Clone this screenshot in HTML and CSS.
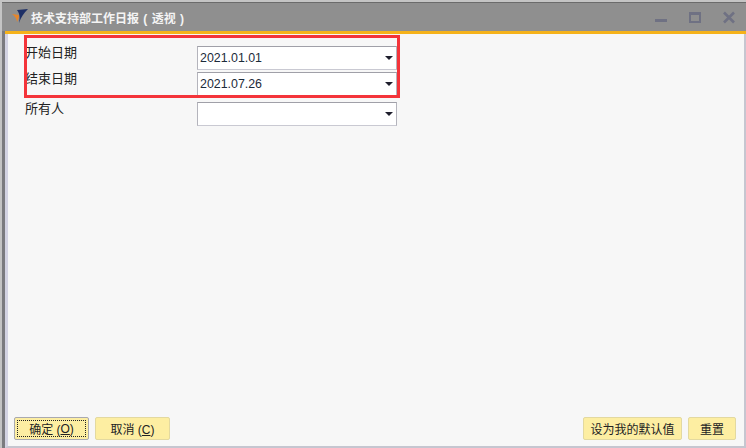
FILE: index.html
```html
<!DOCTYPE html>
<html lang="zh-CN">
<head>
    <meta charset="UTF-8">
    <title>技术支持部工作日报(透视)</title>
    <link rel="stylesheet" href="styles.css">
</head>
<body>
    <div class="window">
        <div class="frame">
            <!-- 标题栏 -->
            <div class="titlebar">
                <svg class="logo" width="16" height="16" viewBox="0 0 16 16">
                    <path d="M5 1 L16 0 C12 4 9 8 7 14 C8 9 8 5 5 1 Z" fill="#1d2f66"/>
                    <path d="M0 5 L7 6 C7 9 6 11 5 13 C5 10 3 7 0 5 Z" fill="#e8862a"/>
                </svg>
                <span class="title">技术支持部工作日报 ( 透视 )</span>
                <div class="controls">
                    <svg width="14" height="14" viewBox="0 0 14 14"><rect x="1" y="8" width="12" height="3" fill="#6f7183"/></svg>
                    <svg width="14" height="14" viewBox="0 0 14 14"><rect x="2" y="2" width="10" height="9" fill="none" stroke="#6f7183" stroke-width="2"/><rect x="2" y="2" width="10" height="2" fill="#6f7183"/></svg>
                    <svg width="14" height="14" viewBox="0 0 14 14"><path d="M2 1.5 L12 11.5 M12 1.5 L2 11.5" stroke="#6f7183" stroke-width="2.6"/></svg>
                </div>
            </div>
            <div class="accent"></div>

            <!-- 查询条件 -->
            <div class="content">
                <div class="fields">
                    <div class="field">
                        <label>开始日期</label>
                        <div class="combo"><span>2021.01.01</span><i class="arrow"></i></div>
                    </div>
                    <div class="field">
                        <label>结束日期</label>
                        <div class="combo"><span>2021.07.26</span><i class="arrow"></i></div>
                    </div>
                    <div class="field field-gap">
                        <label>所有人</label>
                        <div class="combo"><span></span><i class="arrow"></i></div>
                    </div>
                </div>
                <div class="highlight"></div>

                <div class="actions">
                    <button class="btn btn-main focused"><span>确定 (<u>O</u>)</span></button>
                    <button class="btn btn-main">取消 (<u>C</u>)</button>
                    <button class="btn btn-default">设为我的默认值</button>
                    <button class="btn btn-reset">重置</button>
                </div>
            </div>
        </div>
    </div>
</body>
</html>
```

FILE: styles.css
```css
* {
    box-sizing: border-box;
}

html, body {
    margin: 0;
    padding: 0;
    height: 448px;
    overflow: hidden;
}

body {
    font-family: "Liberation Sans", "Noto Sans CJK SC", sans-serif;
    font-size: 13px;
    color: #222;
    background: #fff;
}

.window {
    width: 746px;
    height: 448px;
    padding: 2px 0 0 2px;
    background: #c4c4c4;
}

.frame {
    display: flex;
    flex-direction: column;
    height: 100%;
    border-top: 1px solid #6b6b6b;
    background: #7b7b7f;
}

.titlebar {
    display: flex;
    align-items: center;
    height: 28px;
    padding: 0 10px 0 10px;
    background: #8f8f8f;
}

.logo {
    margin-right: 3px;
}

.title {
    color: #f4f4f4;
    font-size: 12px;
    font-weight: bold;
    word-spacing: 1px;
}

.controls {
    display: flex;
    gap: 20px;
    margin-left: auto;
    padding-top: 2px;
}

.accent {
    height: 3px;
    margin-left: 3px;
    background: #f5b21a;
}

.content {
    position: relative;
    display: flex;
    flex-direction: column;
    flex: 1;
    margin-left: 3px;
    padding: 12px 8px 6px 17px;
    background: #f7f7f7;
    border-left: 3px solid #d3d3e2;
    border-right: 2px solid #c6c6d0;
    border-bottom: 2px solid #c6c6d0;
}

.fields {
    display: flex;
    flex-direction: column;
    gap: 2px;
}

.field {
    display: flex;
    height: 24px;
}

.field-gap {
    margin-top: 4px;
}

.field label {
    width: 172px;
    line-height: 13px;
    font-size: 13px;
}

.combo {
    display: flex;
    align-items: center;
    justify-content: space-between;
    width: 200px;
    padding: 0 3px 0 2px;
    background: #fff;
    border: 1px solid #c9c9d2;
    border-top-color: #a0a0a8;
    border-left-color: #b4b4bc;
    border-right-color: #b4b4bc;
    color: #1c2b3a;
    font-size: 12.4px;
}

.arrow {
    width: 0;
    height: 0;
    border-left: 4px solid transparent;
    border-right: 4px solid transparent;
    border-top: 4px solid #1e1e2c;
}

.highlight {
    position: absolute;
    left: 16px;
    top: 1px;
    width: 376px;
    height: 63px;
    border: 3px solid #f4343a;
    pointer-events: none;
}

.actions {
    display: flex;
    gap: 6px;
    margin-top: auto;
    margin-left: -11px;
}

.btn {
    height: 23px;
    padding: 0;
    font-family: inherit;
    font-size: 12px;
    color: #222;
    background: #fdeea2;
    border: 1px solid #e3d9a0;
    border-radius: 2px;
}

.btn-main {
    width: 75px;
}

.focused {
    padding: 2px;
    border-color: #a9a9b0;
}

.focused span {
    display: flex;
    align-items: center;
    justify-content: center;
    height: 100%;
    border: 1px dotted #222;
    white-space: pre;
}

.btn-default {
    width: 99px;
    margin-left: auto;
}

.btn-reset {
    width: 48px;
}
```
